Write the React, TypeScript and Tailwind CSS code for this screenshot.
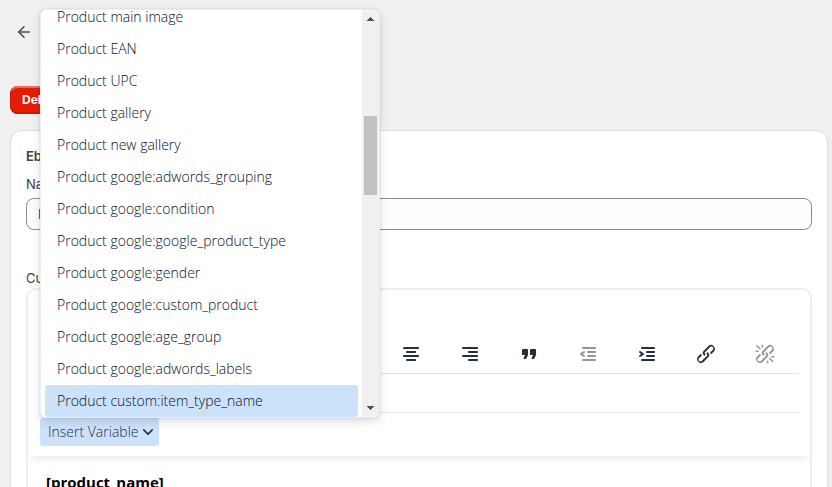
import { ArrowLeft } from 'lucide-react';

const LINK_PATH =
  'M6.2 12.3a1 1 0 0 1 1.4 1.4l-2 2a2 2 0 1 0 2.6 2.8l4.8-4.8a1 1 0 0 0 0-1.4 1 1 0 1 1 1.4-1.3 2.9 2.9 0 0 1 0 4L9.6 20a3.9 3.9 0 0 1-5.5-5.5l2-2Zm11.6-.6a1 1 0 0 1-1.4-1.4l2-2a2 2 0 1 0-2.6-2.8L11 10.3a1 1 0 0 0 0 1.4A1 1 0 1 1 9.6 13a2.9 2.9 0 0 1 0-4L14.4 4a3.9 3.9 0 0 1 5.5 5.5l-2 2Z';

const tools = [
  {
    label: 'Align center',
    path: 'M5 5h14c.6 0 1 .4 1 1s-.4 1-1 1H5a1 1 0 1 1 0-2Zm3 4h8c.6 0 1 .4 1 1s-.4 1-1 1H8a1 1 0 1 1 0-2Zm0 8h8c.6 0 1 .4 1 1s-.4 1-1 1H8a1 1 0 0 1 0-2Zm-3-4h14c.6 0 1 .4 1 1s-.4 1-1 1H5a1 1 0 0 1 0-2Z',
  },
  {
    label: 'Align right',
    path: 'M5 5h14c.6 0 1 .4 1 1s-.4 1-1 1H5a1 1 0 1 1 0-2Zm6 4h8c.6 0 1 .4 1 1s-.4 1-1 1h-8a1 1 0 0 1 0-2Zm0 8h8c.6 0 1 .4 1 1s-.4 1-1 1h-8a1 1 0 0 1 0-2Zm-6-4h14c.6 0 1 .4 1 1s-.4 1-1 1H5a1 1 0 0 1 0-2Z',
  },
  {
    label: 'Blockquote',
    path: 'M7.5 17h.9c.4 0 .7-.2.9-.6L11 13V8c0-.6-.4-1-1-1H6a1 1 0 0 0-1 1v4c0 .6.4 1 1 1h2l-1.3 2.7a1 1 0 0 0 .8 1.3Zm8 0h.9c.4 0 .7-.2.9-.6L19 13V8c0-.6-.4-1-1-1h-4a1 1 0 0 0-1 1v4c0 .6.4 1 1 1h2l-1.3 2.7a1 1 0 0 0 .8 1.3Z',
  },
  {
    label: 'Decrease indent',
    disabled: true,
    path: 'M7 5h12c.6 0 1 .4 1 1s-.4 1-1 1H7a1 1 0 1 1 0-2Zm5 4h7c.6 0 1 .4 1 1s-.4 1-1 1h-7a1 1 0 0 1 0-2Zm0 4h7c.6 0 1 .4 1 1s-.4 1-1 1h-7a1 1 0 0 1 0-2Zm-5 4h12a1 1 0 0 1 0 2H7a1 1 0 0 1 0-2Zm1.6-3.8a1 1 0 0 1-1.2 1.6l-3-2a1 1 0 0 1 0-1.6l3-2a1 1 0 0 1 1.2 1.6L6.8 12l1.8 1.2Z',
  },
  {
    label: 'Increase indent',
    path: 'M7 5h12c.6 0 1 .4 1 1s-.4 1-1 1H7a1 1 0 1 1 0-2Zm5 4h7c.6 0 1 .4 1 1s-.4 1-1 1h-7a1 1 0 0 1 0-2Zm0 4h7c.6 0 1 .4 1 1s-.4 1-1 1h-7a1 1 0 0 1 0-2Zm-5 4h12a1 1 0 0 1 0 2H7a1 1 0 0 1 0-2Zm-2.6-3.8L6.2 12l-1.8-1.2a1 1 0 0 1 1.2-1.6l3 2a1 1 0 0 1 0 1.6l-3 2a1 1 0 1 1-1.2-1.6Z',
  },
  { label: 'Link', path: LINK_PATH },
  {
    label: 'Remove link',
    disabled: true,
    path:
      LINK_PATH +
      'M7.6 6.3a.8.8 0 0 1-1 1.1L3.3 4.2a.7.7 0 1 1 1-1l3.2 3.1ZM5.1 8.6a.8.8 0 0 1 0 1.5H3a.8.8 0 0 1 0-1.5H5Zm5-3.5a.8.8 0 0 1-1.5 0V3a.8.8 0 0 1 1.5 0V5Zm6 11.8a.8.8 0 0 1 1-1l3.2 3.2a.8.8 0 0 1-1 1L16 17Zm-2.2 2a.8.8 0 0 1 1.5 0V21a.8.8 0 0 1-1.5 0V19Zm5-3.5a.7.7 0 1 1 0-1.5H21a.8.8 0 0 1 0 1.5H19Z',
  },
];

const variables = [
  'Product main image',
  'Product EAN',
  'Product UPC',
  'Product gallery',
  'Product new gallery',
  'Product google:adwords_grouping',
  'Product google:condition',
  'Product google:google_product_type',
  'Product google:gender',
  'Product google:custom_product',
  'Product google:age_group',
  'Product google:adwords_labels',
  'Product custom:item_type_name',
];

const ACTIVE = 'Product custom:item_type_name';

function VariableMenu() {
  return (
    <div className="absolute bottom-full left-0 z-10 flex h-[409px] w-[340px] overflow-hidden rounded-md border border-[#eeeeee] bg-white shadow-[0_0_2px_rgba(34,47,62,0.2),0_4px_8px_rgba(34,47,62,0.15)]">
      <ul role="menu" className="flex flex-1 flex-col justify-end overflow-hidden px-1">
        {variables.map((name) => (
          <li key={name} role="none" className="shrink-0">
            <button
              type="button"
              role="menuitem"
              className={`block h-8 w-full rounded-[3px] px-3 text-left text-sm leading-8 font-light text-[#06101c] ${
                name === ACTIVE ? 'bg-[#cce2fa]' : ''
              }`}
            >
              {name}
            </button>
          </li>
        ))}
      </ul>
      <div className="flex w-[17px] flex-col items-center justify-between bg-[#f0f0f0] py-[7px]">
        <svg width="7" height="4" viewBox="0 0 7 4" className="fill-[#505050]" shapeRendering="crispEdges">
          <path d="M3 0h1v1h1v1h1v1h1v1H0V3h1V2h1V1h1Z" />
        </svg>
        <div className="mt-[95px] mb-auto h-[79px] w-[13px] bg-[#c1c1c1]" />
        <svg width="7" height="4" viewBox="0 0 7 4" className="fill-[#505050]" shapeRendering="crispEdges">
          <path d="M0 0h7v1H6v1H5v1H4v1H3V3H2V2H1V1H0Z" />
        </svg>
      </div>
    </div>
  );
}

function Editor() {
  return (
    <div className="rounded-[10px] border-2 border-[#eeeeee] bg-white font-['Open_Sans','Noto_Sans',sans-serif]">
      <div className="pt-11 pr-[11px] pl-3 shadow-[0_2px_2px_-2px_rgba(34,47,62,0.1),0_8px_8px_-4px_rgba(34,47,62,0.07)]">
        <div className="flex h-10 items-center justify-end border-b border-[#e3e3e3] pr-[5px]">
          {tools.map((tool) => (
            <button
              key={tool.label}
              type="button"
              aria-label={tool.label}
              disabled={tool.disabled}
              className="flex h-7 w-[59px] items-center justify-center text-[#222f3e] disabled:opacity-50"
            >
              <svg width="24" height="24" viewBox="0 0 24 24" fill="currentColor" fillRule="evenodd">
                <path d={tool.path} />
              </svg>
            </button>
          ))}
        </div>
        <div className="h-[39px] border-b border-[#e3e3e3]" />
        <div className="flex h-[43px] items-start pt-[5px]">
          <div className="relative">
            <button
              type="button"
              aria-haspopup="menu"
              aria-expanded="true"
              className="flex h-7 items-center gap-1 rounded-[3px] bg-[#cce2fa] pr-[6px] pl-2 text-sm font-light text-[#222f3e]"
            >
              Insert Variable
              <svg width="10" height="10" viewBox="0 0 10 10" className="fill-[#222f3e]">
                <path d="M8.7 2.2c.3-.3.8-.3 1 0 .4.4.4.9 0 1.2L5.7 7.8c-.3.3-.9.3-1.2 0L.2 3.4a.8.8 0 0 1 0-1.2c.3-.3.8-.3 1.1 0L5 6l3.7-3.8Z" />
              </svg>
            </button>
            <VariableMenu />
          </div>
        </div>
      </div>
      <div className="px-[18px] pt-4 pb-10 text-[15px] leading-5 font-bold text-black">
        <p>[product_name]</p>
      </div>
    </div>
  );
}

export default function App() {
  return (
    <main className="h-screen overflow-hidden bg-[#f0f0f0] pr-1 pl-[10px] font-[Inter,sans-serif] text-[13px] leading-5 text-[#404040]">
      <header className="flex h-[130px] flex-col items-start pt-[22px]">
        <a href="#" aria-label="Back" className="ml-1 flex h-5 w-5 items-center justify-center text-[#4a4a4a]">
          <ArrowLeft size={18} strokeWidth={2} />
        </a>
        <button
          type="button"
          className="mt-11 h-7 rounded-lg bg-[#e51c00] px-3 text-xs font-bold text-white shadow-[inset_0_-1px_0_1px_#c41a00,inset_0_2px_0_rgba(255,255,255,0.35)]"
        >
          Delete
        </button>
      </header>

      <section className="rounded-xl border border-[#dedede] bg-white px-[15px] pt-[15px] pb-4">
        <h2 className="font-semibold">Ebay</h2>
        <label htmlFor="name" className="mt-2 block">
          Name
        </label>
        <input
          id="name"
          type="text"
          defaultValue="Ebay"
          className="mt-1 block h-8 w-full rounded-lg border border-[#8a8a8a] bg-[#fdfdfd] px-[11px]"
        />
        <h3 className="mt-[38px]">Custom</h3>
        <Editor />
      </section>
    </main>
  );
}
